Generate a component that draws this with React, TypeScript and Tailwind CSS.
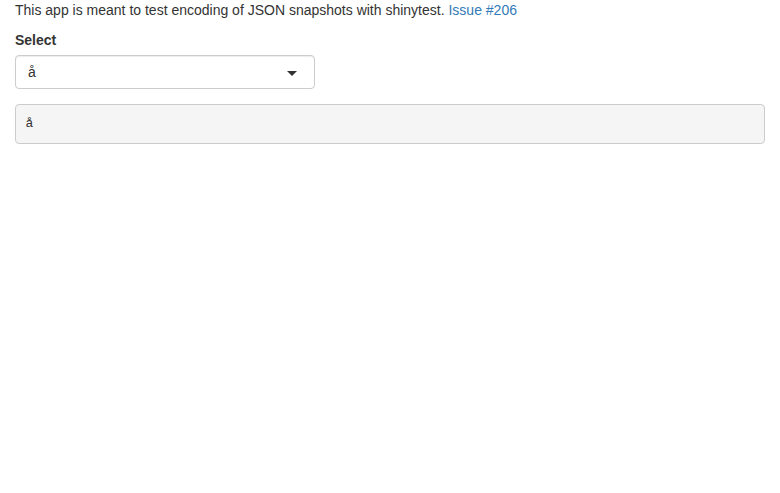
export default function App() {
  return (
    <div className="min-h-screen bg-white px-[15px] text-[14px] leading-[20px] text-[#333] font-['Liberation_Sans',Arial,sans-serif]">
      <p className="mb-[10px]">
        This app is meant to test encoding of JSON snapshots with shinytest.{" "}
        <a href="#" className="text-[#337ab7]">
          Issue #206
        </a>
      </p>
      <div className="mb-[15px] w-[300px]">
        <label className="mb-[5px] block font-bold">Select</label>
        <div className="relative flex h-[34px] items-center rounded-[4px] border border-[#ccc] bg-white px-3 shadow-[inset_0_1px_1px_rgba(0,0,0,0.075)]">
          <span>å</span>
          <span className="absolute right-[17px] top-[15px] h-0 w-0 border-x-[5px] border-t-[5px] border-x-transparent border-t-[#333]" />
        </div>
      </div>
      <pre className="mb-[10px] rounded-[4px] border border-[#ccc] bg-[#f5f5f5] p-[9.5px] text-[13px] leading-[18.57px] text-[#333] font-['Liberation_Mono','Courier_New',monospace]">
        å
      </pre>
    </div>
  );
}
